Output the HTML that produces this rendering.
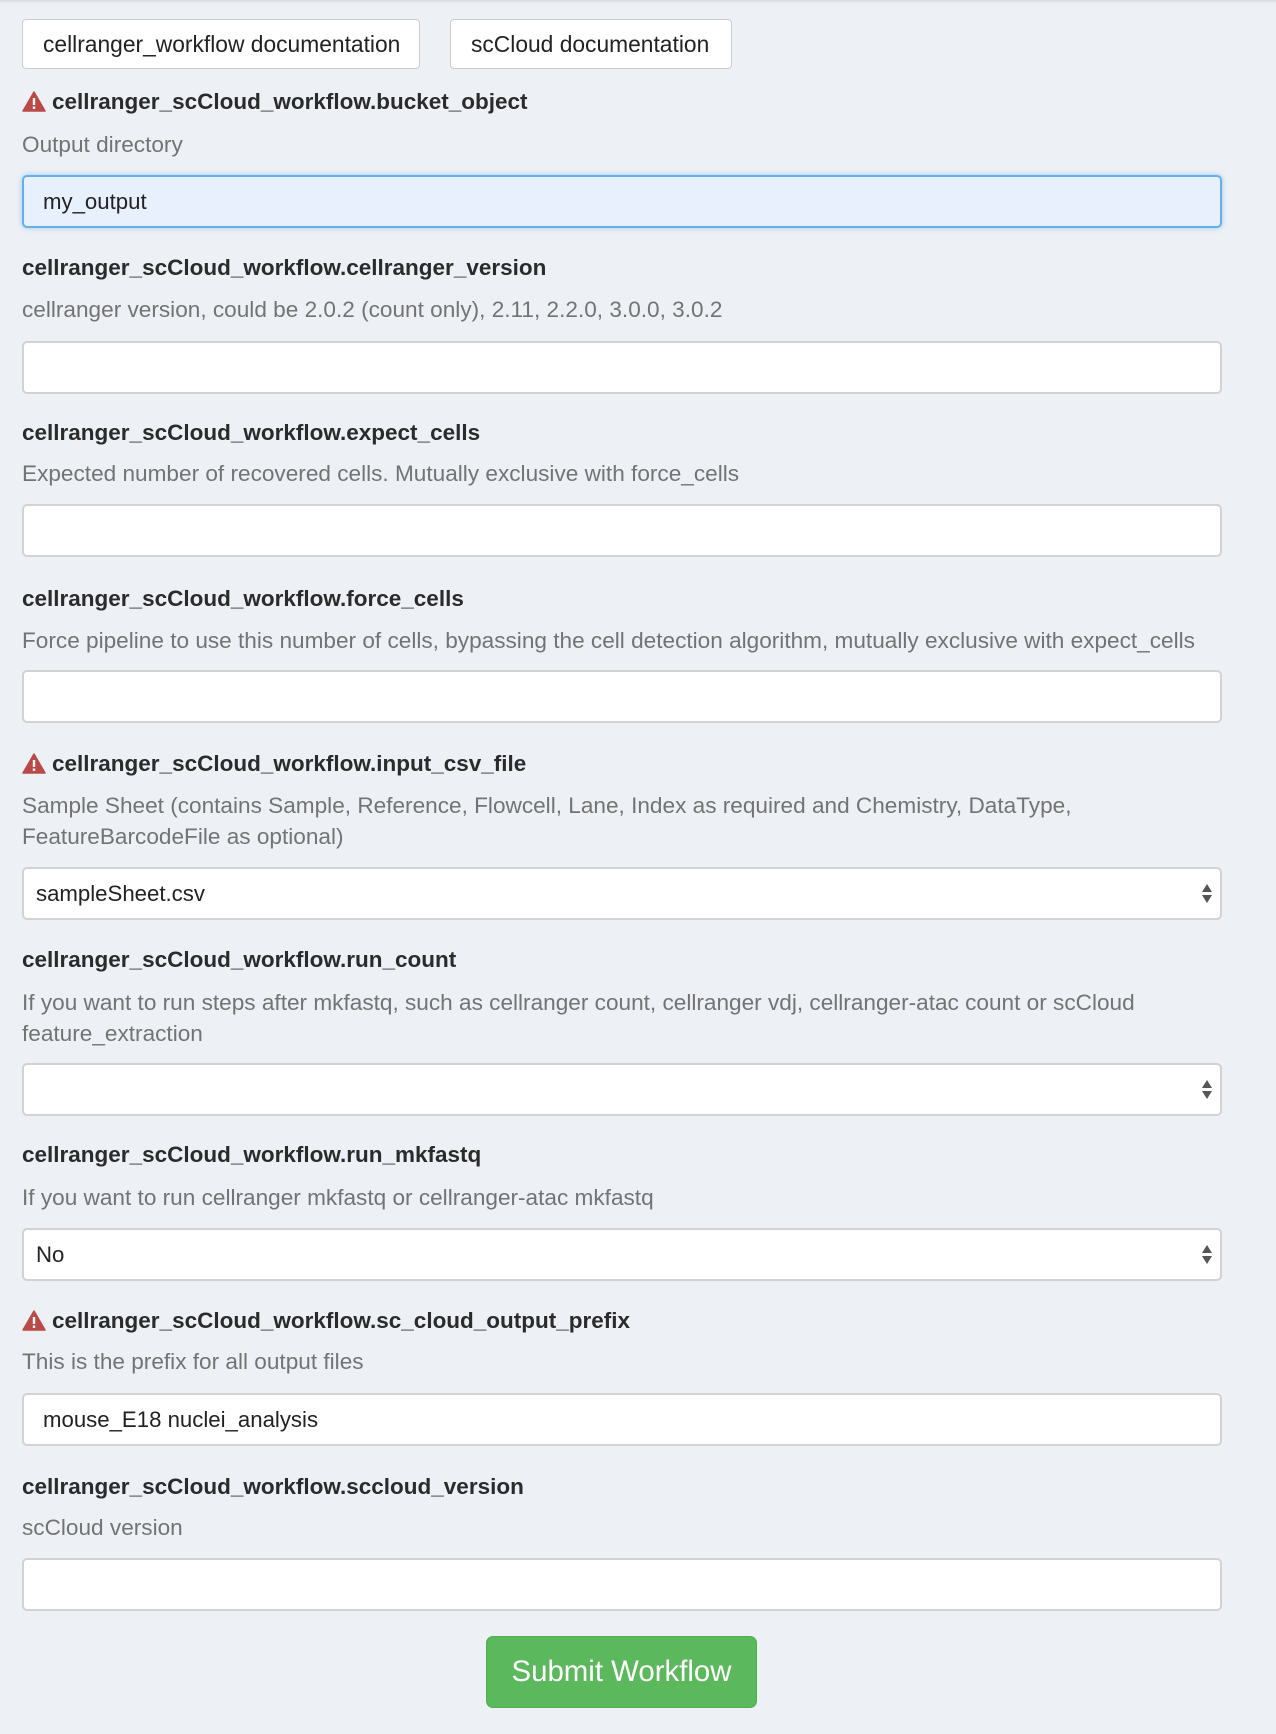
<!DOCTYPE html>
<html><head><meta charset="utf-8"><style>
*{box-sizing:border-box;margin:0;padding:0}
body{width:1276px;height:1734px;background:#edf1f5;font-family:"Liberation Sans",Arial,sans-serif;position:relative;overflow:hidden;color:#333}
.top{position:absolute;left:0;top:0;width:1276px;height:4px;background:linear-gradient(#d9dde2,#edf1f5)}
.btn{position:absolute;top:19px;height:50px;background:#fff;border:1px solid #ccc;border-radius:4px;font-size:22.8px;line-height:48px;padding-left:20px;color:#222;white-space:nowrap}
.h{position:absolute;left:22px;font-weight:bold;font-size:22.5px;color:#2b2b2b;line-height:24px;white-space:nowrap}
.h svg{vertical-align:-3px;margin-right:6px}
.d{position:absolute;left:22px;font-size:22.6px;color:#737373;line-height:31px;white-space:nowrap}
.in{position:absolute;left:22px;width:1200px;height:53px;background:#fff;border:2px solid #d2d2d2;border-radius:5px;font-size:22.2px;line-height:49px;padding-left:19px;color:#222}
.sel{padding-left:12px}
.sel:after{content:"";position:absolute;right:8px;top:15px;width:0;height:0;border-left:5px solid transparent;border-right:5px solid transparent;border-bottom:8px solid #555}
.sel:before{content:"";position:absolute;right:8px;top:26px;width:0;height:0;border-left:5px solid transparent;border-right:5px solid transparent;border-top:8px solid #555}
.focus{background:#e8f0fe;border-color:#66afe9;box-shadow:0 0 6px rgba(102,175,233,.6)}
.sub{position:absolute;left:486px;top:1636px;width:271px;height:72px;background:#5cb85c;border:1px solid #4cae4c;border-radius:7px;color:#fff;font-size:29.4px;line-height:70px;text-align:center}
</style></head><body>
<div class="top"></div>
<div class="btn" style="left:22px;width:398px">cellranger_workflow documentation</div>
<div class="btn" style="left:450px;width:282px">scCloud documentation</div>

<div class="h" style="top:90px"><svg width="24" height="21" viewBox="0 0 24 21"><path d="M12 1 L23 20 L1 20 Z" fill="#b94a48" stroke="#b94a48" stroke-width="1.5" stroke-linejoin="round"/><rect x="10.8" y="7" width="2.4" height="7" fill="#fff"/><rect x="10.8" y="15.5" width="2.4" height="2.4" fill="#fff"/></svg>cellranger_scCloud_workflow.bucket_object</div>
<div class="d" style="top:129px">Output directory</div>
<div class="in focus" style="top:175px">my_output</div>

<div class="h" style="top:256px">cellranger_scCloud_workflow.cellranger_version</div>
<div class="d" style="top:294px">cellranger version, could be 2.0.2 (count only), 2.11, 2.2.0, 3.0.0, 3.0.2</div>
<div class="in" style="top:341px"></div>

<div class="h" style="top:421px">cellranger_scCloud_workflow.expect_cells</div>
<div class="d" style="top:458px">Expected number of recovered cells. Mutually exclusive with force_cells</div>
<div class="in" style="top:504px"></div>

<div class="h" style="top:587px">cellranger_scCloud_workflow.force_cells</div>
<div class="d" style="top:625px">Force pipeline to use this number of cells, bypassing the cell detection algorithm, mutually exclusive with expect_cells</div>
<div class="in" style="top:670px"></div>

<div class="h" style="top:752px"><svg width="24" height="21" viewBox="0 0 24 21"><path d="M12 1 L23 20 L1 20 Z" fill="#b94a48" stroke="#b94a48" stroke-width="1.5" stroke-linejoin="round"/><rect x="10.8" y="7" width="2.4" height="7" fill="#fff"/><rect x="10.8" y="15.5" width="2.4" height="2.4" fill="#fff"/></svg>cellranger_scCloud_workflow.input_csv_file</div>
<div class="d" style="top:790px">Sample Sheet (contains Sample, Reference, Flowcell, Lane, Index as required and Chemistry, DataType,<br>FeatureBarcodeFile as optional)</div>
<div class="in sel" style="top:867px">sampleSheet.csv</div>

<div class="h" style="top:948px">cellranger_scCloud_workflow.run_count</div>
<div class="d" style="top:987px">If you want to run steps after mkfastq, such as cellranger count, cellranger vdj, cellranger-atac count or scCloud<br>feature_extraction</div>
<div class="in sel" style="top:1063px"></div>

<div class="h" style="top:1143px">cellranger_scCloud_workflow.run_mkfastq</div>
<div class="d" style="top:1182px">If you want to run cellranger mkfastq or cellranger-atac mkfastq</div>
<div class="in sel" style="top:1228px">No</div>

<div class="h" style="top:1309px"><svg width="24" height="21" viewBox="0 0 24 21"><path d="M12 1 L23 20 L1 20 Z" fill="#b94a48" stroke="#b94a48" stroke-width="1.5" stroke-linejoin="round"/><rect x="10.8" y="7" width="2.4" height="7" fill="#fff"/><rect x="10.8" y="15.5" width="2.4" height="2.4" fill="#fff"/></svg>cellranger_scCloud_workflow.sc_cloud_output_prefix</div>
<div class="d" style="top:1346px">This is the prefix for all output files</div>
<div class="in" style="top:1393px">mouse_E18 nuclei_analysis</div>

<div class="h" style="top:1475px">cellranger_scCloud_workflow.sccloud_version</div>
<div class="d" style="top:1512px">scCloud version</div>
<div class="in" style="top:1558px"></div>

<div class="sub">Submit Workflow</div>
</body></html>
